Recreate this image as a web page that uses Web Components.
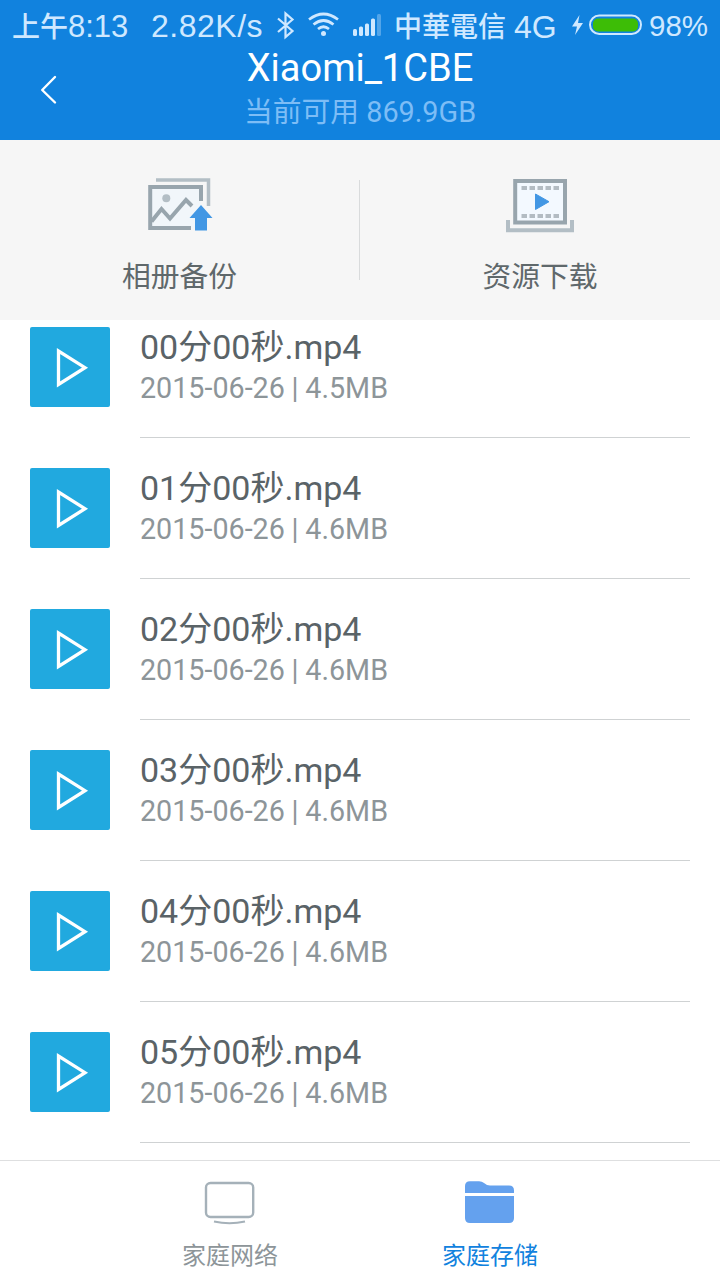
<!DOCTYPE html>
<html lang="zh-CN">
<head>
<meta charset="UTF-8">
<title>Xiaomi_1CBE</title>
<style>
  body {
    margin: 0;
    width: 720px;
    height: 1280px;
    overflow: hidden;
    background: #fff;
    font-family: Roboto, "Noto Sans CJK SC", sans-serif;
  }
</style>
</head>
<body>
<storage-app></storage-app>

<script>
  class StatusBar extends HTMLElement {
    constructor() {
      super();
      this.attachShadow({ mode: "open" });
      this.shadowRoot.innerHTML = `
        <style>
          :host {
            display: flex;
            align-items: flex-start;
            height: 50px;
            padding: 0 0 0 12px;
            box-sizing: border-box;
            color: #cfe8ff;
            font: 31px/50px "Liberation Sans", "Noto Sans CJK TC", sans-serif;
            white-space: nowrap;
          }
          span { flex: none; height: 50px; }
          svg { flex: none; display: block; }
          .time { width: 139px; padding-top: 2px; height: 48px; }
          .cjk { font-size: 28px; font-weight: 500; }
          .speed { width: 124px; padding-top: 1px; font-size: 32px; letter-spacing: 0.5px; }
          .carrier { width: 120px; margin-left: 1px; padding-top: 3px; font-size: 28px; font-weight: 500; }
          .net { width: 56px; padding-top: 2px; font-size: 32px; }
          .level { padding-top: 1px; font-size: 29.5px; }
        </style>
        <span class="time"><span class="cjk">上午</span>8:13</span>
        <span class="speed">2.82K/s</span>
        <svg width="118" height="50" viewBox="275 0 118 50" fill="none" stroke="#cfe8ff">
          <path d="M278 18.500 L292.500 31 L285.500 37 V13.500 L292.500 19.500 L278 32" stroke-width="2.200"/>
          <path d="M309 19.500 Q323.500 8.500 338 19.500 M313.500 24.500 Q323.500 16.500 333.500 24.500 M318 29 Q323.500 24.500 329 29" stroke-width="2.700"/>
          <circle cx="323.500" cy="33.500" r="2.500" fill="#cfe8ff" stroke="none"/>
          <g fill="#cfe8ff" stroke="none">
            <rect x="353" y="29" width="4" height="7" rx="1.500"/>
            <rect x="359" y="26.500" width="4" height="9.500" rx="1.500"/>
            <rect x="365" y="23.500" width="4" height="12.500" rx="1.500"/>
            <rect x="371" y="18.500" width="4" height="17.500" rx="1.500"/>
            <rect x="377" y="14" width="4" height="22" rx="1.500" opacity="0.350"/>
          </g>
        </svg>
        <span class="carrier">中華電信</span>
        <span class="net">4G</span>
        <svg width="79" height="50" viewBox="570 0 79 50">
          <path d="M579.500 15 L572 26.500 H577 L575 35 L583 23 H578 Z" fill="#cfe8ff"/>
          <rect x="590" y="15.500" width="51" height="18.500" rx="9.250" fill="none" stroke="#cfe8ff" stroke-width="2"/>
          <rect x="593" y="18.500" width="45" height="13" rx="5" fill="#3dbd06"/>
        </svg>
        <span class="level">98%</span>
      `;
    }
  }

  class NavBar extends HTMLElement {
    constructor() {
      super();
      this.attachShadow({ mode: "open" });
      this.shadowRoot.innerHTML = `
        <style>
          :host {
            display: grid;
            grid-template-columns: 100px 1fr 100px;
            height: 90px;
            color: #fff;
            text-align: center;
          }
          .back { display: block; }
          h1 {
            margin: 0;
            height: 40px;
            font-size: 38px;
            font-weight: 400;
            line-height: 36px;
          }
          p {
            margin: 0;
            height: 40px;
            font-size: 28.8px;
            line-height: 44px;
            color: #7dbdf6;
          }
        </style>
        <svg class="back" width="100" height="90" viewBox="0 50 100 90">
          <path d="M55 77 L42.200 90 L55 102.500" fill="none" stroke="#fff" stroke-width="2.400" stroke-linecap="round" stroke-linejoin="round"/>
        </svg>
        <div>
          <h1><slot></slot></h1>
          <p><slot name="subtitle"></slot></p>
        </div>
      `;
    }
  }

  class ActionTile extends HTMLElement {
    constructor() {
      super();
      this.attachShadow({ mode: "open" });
      this.shadowRoot.innerHTML = `
        <style>
          :host {
            display: flex;
            flex-direction: column;
            align-items: center;
            color: #5f686b;
            font-size: 28.8px;
            line-height: 40px;
          }
          .icon { height: 81px; margin: 36px 0 0; }
        </style>
        <div class="icon"><slot name="icon"></slot></div>
        <div><slot></slot></div>
      `;
    }
  }

  class VideoRow extends HTMLElement {
    constructor() {
      super();
      this.attachShadow({ mode: "open" });
      this.shadowRoot.innerHTML = `
        <style>
          :host {
            display: flex;
            gap: 30px;
            height: 141px;
            padding: 0 30px;
          }
          .thumb { flex: none; margin-top: 30px; }
          .info {
            flex: 1;
            height: 140px;
            border-bottom: 1px solid #cfd2d3;
          }
          .name {
            margin-top: 30px;
            height: 41px;
            font-size: 34px;
            line-height: 40px;
            color: #5a6367;
          }
          .meta {
            height: 40px;
            font-size: 28.7px;
            line-height: 40px;
            word-spacing: -0.4px;
            color: #8d9599;
          }
        </style>
        <svg class="thumb" width="80" height="80" viewBox="0 0 80 80">
          <rect width="80" height="80" rx="2" fill="#21a9df"/>
          <path d="M28.500 24 V57.500 L55 40.700 Z" fill="none" stroke="#fff" stroke-width="3.300"/>
        </svg>
        <div class="info">
          <div class="name"></div>
          <div class="meta"></div>
        </div>
      `;
    }

    static get observedAttributes() {
      return ["data-name", "data-date", "data-size"];
    }

    attributeChangedCallback(name, oldValue, newValue) {
      if (name === "data-name") {
        this.shadowRoot.querySelector(".name").textContent = newValue;
        return;
      }
      const { date, size } = this.dataset;
      this.shadowRoot.querySelector(".meta").textContent = `${date} | ${size}`;
    }
  }

  class TabItem extends HTMLElement {
    constructor() {
      super();
      this.attachShadow({ mode: "open" });
      this.shadowRoot.innerHTML = `
        <style>
          :host {
            display: flex;
            flex-direction: column;
            align-items: center;
            width: 260px;
            color: #8d9599;
            font-size: 24px;
            line-height: 36px;
          }
          :host([active]) { color: #1182de; }
          .icon { height: 62px; margin-top: 15px; }
        </style>
        <div class="icon"><slot name="icon"></slot></div>
        <div><slot></slot></div>
      `;
    }
  }

  class StorageApp extends HTMLElement {
    constructor() {
      super();
      this.attachShadow({ mode: "open" });
      this.shadowRoot.innerHTML = `
        <style>
          :host {
            display: flex;
            flex-direction: column;
            width: 720px;
            height: 1280px;
          }
          header { background: #1182de; height: 140px; flex: none; }
          .actions {
            flex: none;
            display: grid;
            grid-template-columns: 359px 1px 360px;
            height: 180px;
            background: #f6f6f6;
          }
          .divider { height: 100px; margin-top: 40px; background: #d9dbdc; }
          .list {
            flex: 1;
            min-height: 0;
            overflow: hidden;
            display: flex;
            flex-direction: column;
          }
          .list video-row { flex: none; }
          .list video-row:first-child { margin-top: -23px; }
          footer {
            flex: none;
            display: flex;
            justify-content: center;
            height: 119px;
            border-top: 1px solid #dedfe0;
            background: #fff;
          }
          svg { display: block; }
        </style>
        <header>
          <status-bar></status-bar>
          <nav-bar>Xiaomi_1CBE<span slot="subtitle">当前可用 869.9GB</span></nav-bar>
        </header>
        <div class="actions">
          <action-tile>
            <svg slot="icon" width="70" height="60" viewBox="145 176 70 60" fill="none">
              <path d="M156 180 H208.500 V206" stroke="#b3bec5" stroke-width="3.500"/>
              <path d="M150.200 187 H201 V228 H150.200 Z" fill="#f1f6fa"/>
              <path d="M201 201 V187 H150.200 V228 H191" stroke="#98a5ad" stroke-width="4"/>
              <circle cx="166.300" cy="198.300" r="4" fill="#b3bec5"/>
              <path d="M151.500 221.500 L161.500 209 L170 218.500 L186 200 L192 206" stroke="#98a5ad" stroke-width="4"/>
              <path d="M201 205 L212.500 218 H207 V230.500 H195 V218 H189.500 Z" fill="#4297e4"/>
            </svg>
            相册备份
          </action-tile>
          <div class="divider"></div>
          <action-tile>
            <svg slot="icon" width="70" height="60" viewBox="505 176 70 60" fill="none">
              <path d="M508 220 V230.300 H572 V220" stroke="#b3bec5" stroke-width="4"/>
              <rect x="515.200" y="181" width="49.800" height="41.500" fill="#f3f9ff" stroke="#98a5ad" stroke-width="4"/>
              <path d="M521.500 188 H560 M521.500 216 H560" stroke="#b3bcc3" stroke-width="4" stroke-dasharray="5.500 2.500"/>
              <path d="M535.500 194 V209.500 L549 201.700 Z" fill="#4297e4" stroke="#4297e4" stroke-linejoin="round"/>
            </svg>
            资源下载
          </action-tile>
        </div>
        <div class="list">
          <video-row data-name="00分00秒.mp4" data-date="2015-06-26" data-size="4.5MB"></video-row>
          <video-row data-name="01分00秒.mp4" data-date="2015-06-26" data-size="4.6MB"></video-row>
          <video-row data-name="02分00秒.mp4" data-date="2015-06-26" data-size="4.6MB"></video-row>
          <video-row data-name="03分00秒.mp4" data-date="2015-06-26" data-size="4.6MB"></video-row>
          <video-row data-name="04分00秒.mp4" data-date="2015-06-26" data-size="4.6MB"></video-row>
          <video-row data-name="05分00秒.mp4" data-date="2015-06-26" data-size="4.6MB"></video-row>
        </div>
        <footer>
          <tab-item>
            <svg slot="icon" width="60" height="54" viewBox="200 1176 60 54" fill="none" stroke="#a5b1b9" stroke-width="2.400">
              <rect x="206" y="1183" width="47.200" height="34" rx="4.500"/>
              <path d="M214 1221.500 Q229.500 1225 245 1221.500" stroke-width="2.200"/>
            </svg>
            家庭网络
          </tab-item>
          <tab-item active>
            <svg slot="icon" width="60" height="54" viewBox="460 1176 60 54" fill="#64a1ee">
              <path d="M465 1193 V1186 Q465 1181.300 470 1181.300 H479 Q482 1181.300 484 1183 Q487 1185.500 490 1185.500 H509 Q514 1185.500 514 1190.500 V1193 Z"/>
              <path d="M465 1196 H514 V1218 Q514 1223 509 1223 H470 Q465 1223 465 1218 Z"/>
            </svg>
            家庭存储
          </tab-item>
        </footer>
      `;
    }
  }

  customElements.define("status-bar", StatusBar);
  customElements.define("nav-bar", NavBar);
  customElements.define("action-tile", ActionTile);
  customElements.define("video-row", VideoRow);
  customElements.define("tab-item", TabItem);
  customElements.define("storage-app", StorageApp);
</script>
</body>
</html>
